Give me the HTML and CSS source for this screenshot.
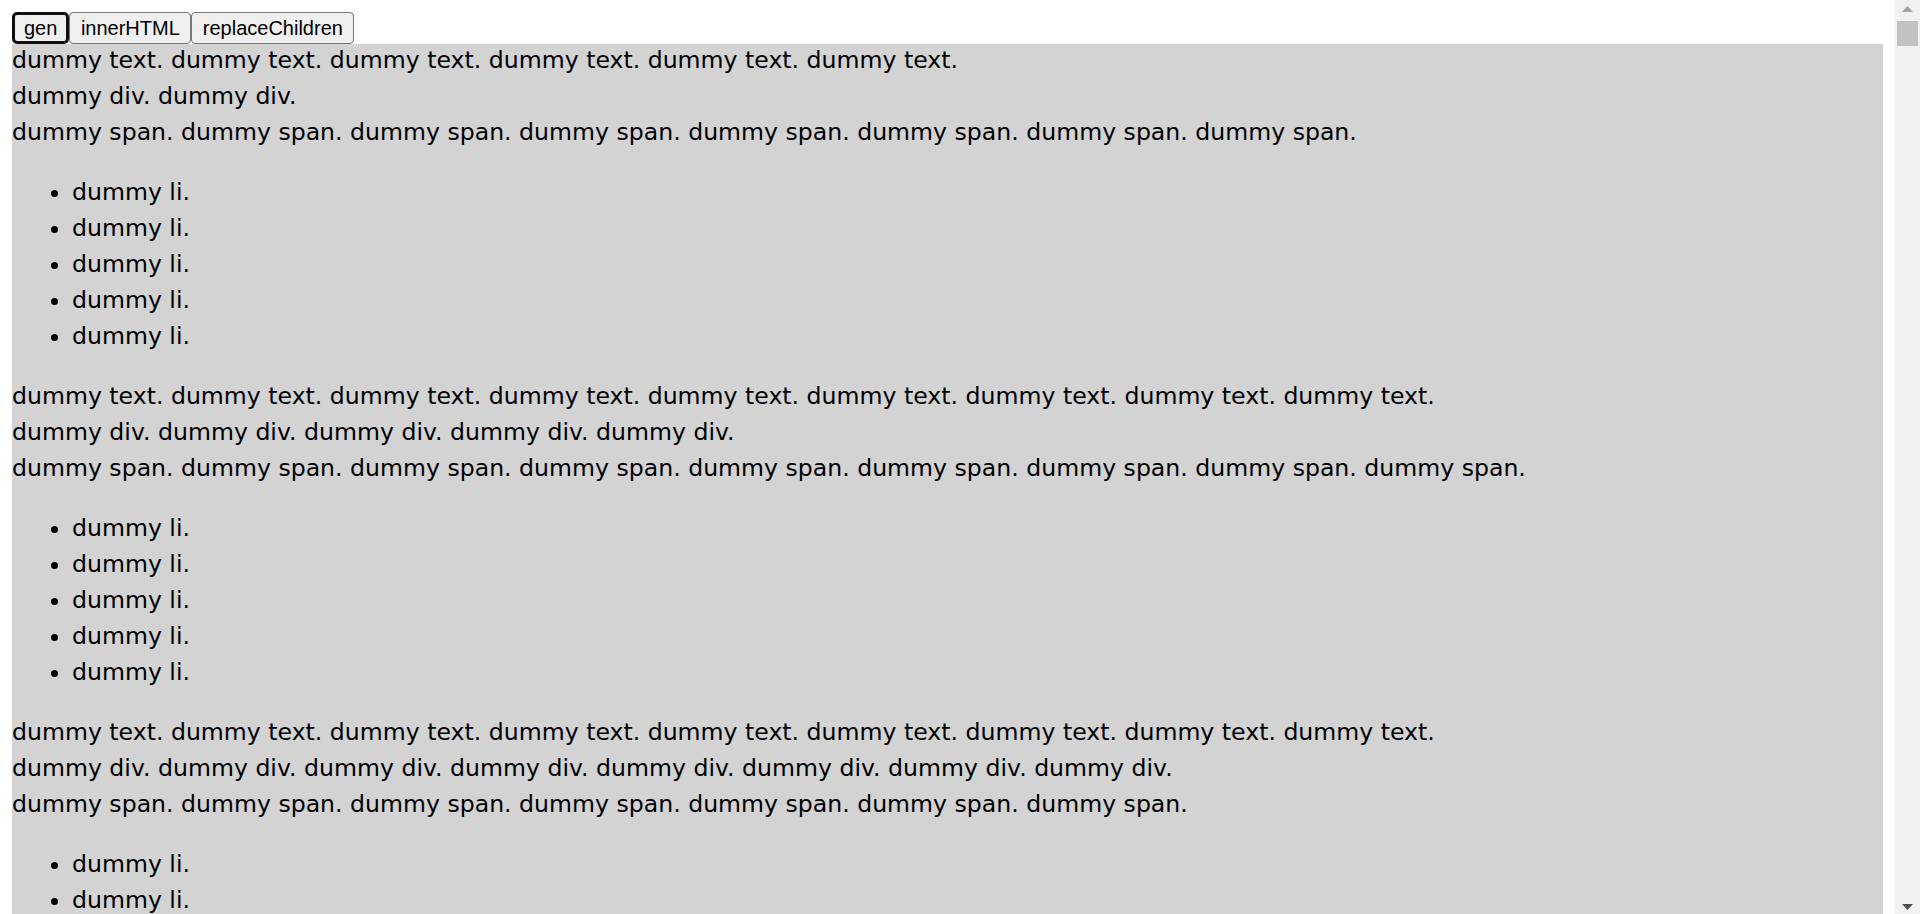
FILE: index.html
```html
<!DOCTYPE html>
<html lang="en">
<head>
<meta charset="utf-8">
<title>dummy</title>
<link rel="stylesheet" href="styles.css">
</head>
<body>
<div class="viewport">
  <div class="page">
    <div class="toolbar"><button class="btn focused">gen</button><button class="btn">innerHTML</button><button class="btn">replaceChildren</button></div>
    <div class="output">
      <div class="content">dummy text. dummy text. dummy text. dummy text. dummy text. dummy text.
        <div>dummy div. dummy div.</div>
        <span>dummy span. dummy span. dummy span. dummy span. dummy span. dummy span. dummy span. dummy span.</span>
        <ul>
          <li>dummy li.</li>
          <li>dummy li.</li>
          <li>dummy li.</li>
          <li>dummy li.</li>
          <li>dummy li.</li>
        </ul>dummy text. dummy text. dummy text. dummy text. dummy text. dummy text. dummy text. dummy text. dummy text.
        <div>dummy div. dummy div. dummy div. dummy div. dummy div.</div>
        <span>dummy span. dummy span. dummy span. dummy span. dummy span. dummy span. dummy span. dummy span. dummy span.</span>
        <ul>
          <li>dummy li.</li>
          <li>dummy li.</li>
          <li>dummy li.</li>
          <li>dummy li.</li>
          <li>dummy li.</li>
        </ul>dummy text. dummy text. dummy text. dummy text. dummy text. dummy text. dummy text. dummy text. dummy text.
        <div>dummy div. dummy div. dummy div. dummy div. dummy div. dummy div. dummy div. dummy div.</div>
        <span>dummy span. dummy span. dummy span. dummy span. dummy span. dummy span. dummy span.</span>
        <ul>
          <li>dummy li.</li>
          <li>dummy li.</li>
          <li>dummy li.</li>
          <li>dummy li.</li>
          <li>dummy li.</li>
        </ul>
      </div>
    </div>
  </div>
  <div class="scrollbar">
    <div class="sb-button">
      <svg width="11" height="6" viewBox="0 0 11 6"><polygon points="5.5,0 11,6 0,6" fill="#a3a3a3"/></svg>
    </div>
    <div class="sb-thumb"></div>
    <div class="sb-track"></div>
    <div class="sb-button sb-down">
      <svg width="11" height="6" viewBox="0 0 11 6"><polygon points="0,0 11,0 5.5,6" fill="#505050"/></svg>
    </div>
  </div>
</div>
</body>
</html>
```
FILE: styles.css
```css
html, body {
  margin: 0;
  padding: 0;
  height: 100%;
  overflow: hidden;
  background: #ffffff;
}

.viewport {
  display: flex;
  width: 1920px;
  height: 914px;
  overflow: hidden;
}

.page {
  flex: 1;
  padding: 12px 12px 0 12px;
  overflow: hidden;
  font-family: "DejaVu Sans", "Noto Sans CJK JP", sans-serif;
  font-size: 23.6px;
  line-height: 36px;
  color: #000000;
}

.toolbar {
  display: flex;
  height: 32px;
}

.btn {
  font-family: "Liberation Sans", Arial, sans-serif;
  font-size: 20px;
  line-height: 23px;
  color: #000000;
  background: #efefef;
  border: 1.5px solid #767676;
  border-radius: 4px;
  padding: 3px 10.5px;
  margin: 0;
  height: 32px;
}

.btn.focused {
  border: 3px solid #101010;
  border-radius: 5px;
  padding: 1.5px 9px;
}

.output {
  background: #d3d3d3;
  min-height: 2000px;
  display: flow-root;
}

.content {
  margin-top: -2px;
}

.output ul {
  margin: 24px 0;
  padding-left: 60px;
}

.scrollbar {
  width: 25px;
  flex: none;
  background: #f1f1f1;
  display: flex;
  flex-direction: column;
  align-items: center;
}

.sb-button {
  height: 21px;
  width: 25px;
  display: flex;
  justify-content: center;
  align-items: flex-start;
  padding-top: 6px;
  box-sizing: border-box;
}

.sb-down {
  align-items: flex-end;
  padding-top: 0;
  padding-bottom: 4px;
}

.sb-thumb {
  width: 21px;
  height: 25px;
  background: #c1c1c1;
}

.sb-track {
  flex: 1;
}
```
